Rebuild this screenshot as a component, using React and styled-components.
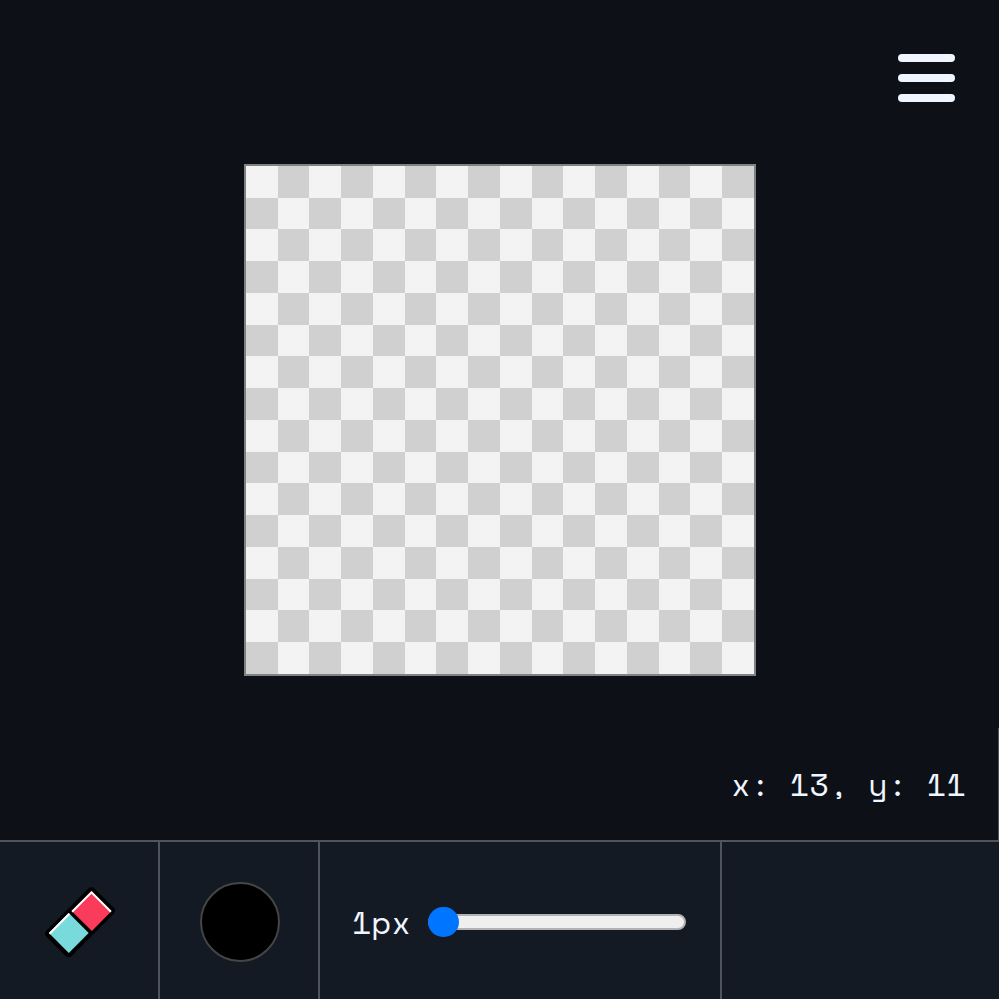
import React, { useEffect, useRef } from 'react';
import styled, { createGlobalStyle } from 'styled-components';

const GlobalStyle = createGlobalStyle`
  * { box-sizing: border-box; }
  body {
    margin: 0;
    overflow: hidden;
    background: #0d1017;
    color: #f0f6ff;
    font-family: "Space Mono", "DejaVu Sans Mono", monospace;
  }
`;

const Editor = styled.div`
  display: grid;
  grid-template-rows: 164px 564px 112px 159px;
  width: 100%;
  height: 999px;
`;

const Header = styled.header`
  display: flex;
  justify-content: flex-end;
  align-items: flex-start;
  padding: 54px 44px 0 0;
`;

const MenuButton = styled.button`
  display: flex;
  flex-direction: column;
  gap: 12px;
  width: 57px;
  padding: 0;
  border: 0;
  background: none;
`;

const MenuBar = styled.span`
  height: 8px;
  border-radius: 4px;
  background: #f0f6ff;
`;

const Stage = styled.main`
  display: flex;
  align-items: flex-start;
  padding-left: 244px;
`;

const Board = styled.canvas`
  width: 512px;
  height: 512px;
  border: 2px solid #808183;
  image-rendering: pixelated;
`;

const Status = styled.div`
  display: flex;
  justify-content: flex-end;
  align-items: center;
  padding-right: 32px;
  border-right: 1px solid #505459;
`;

const Label = styled.span`
  font-size: 32px;
  line-height: 48px;
  white-space: pre;
`;

const Toolbar = styled.footer`
  display: grid;
  grid-template-columns: 160px 160px 402px 1fr;
  border-top: 2px solid #50545b;
  background: #131a23;
`;

const Tool = styled.div`
  display: flex;
  align-items: center;
  justify-content: center;
  height: 160px;
  padding-left: ${({ $edge }) => ($edge ? '2px' : '0')};
  border-right: 2px solid #50545b;
`;

const SizeTool = styled(Tool)`
  justify-content: flex-start;
  gap: 17.25px;
  padding-left: 32px;
`;

const Swatch = styled.button`
  width: 80px;
  height: 80px;
  margin-left: 2px;
  padding: 0;
  border: 2px solid #454545;
  border-radius: 50%;
  background: #000;
`;

const SizeSlider = styled.input`
  appearance: none;
  width: 258px;
  height: 16px;
  margin: 0;
  border: 2px solid #b2b2b5;
  border-radius: 8px;
  background: #efefef;

  &::-webkit-slider-thumb {
    appearance: none;
    width: 30.5px;
    height: 30.5px;
    margin-left: -2px;
    border-radius: 50%;
    background: #0075ff;
  }
`;

const EraserIcon = () => (
  <svg width="80" height="80" viewBox="0 0 80 80">
    <path d="M51.4 9.4 70.8 28.8 28.6 71 9.2 51.6Z" stroke="#000" strokeWidth="8.4" strokeLinejoin="round" />
    <path d="M51.5 8.9 71.6 29 51.9 48.9 31.6 29Z" fill="#fa3b5b" />
    <path d="M28.7 31 48.7 51 28.8 70.9 8.9 51Z" fill="#79dadb" />
    <path d="M31.4 29 51.5 8.9 71.6 29 70.2 30.4 51.5 11.7 32.8 30.4Z" fill="#fff" />
    <path d="M8.8 51 28.6 31 30.2 32.6 10.2 52.4Z" fill="#fff" />
  </svg>
);

const CELLS = 16;
const BOARD_SIZE = 508;

// Whole-pixel position of a cell edge; halves go to the lower pixel.
const edge = (i) => Math.ceil((i * BOARD_SIZE) / CELLS - 0.5);

function PixelBoard() {
  const ref = useRef(null);
  useEffect(() => {
    const ctx = ref.current.getContext('2d');
    for (let y = 0; y < CELLS; y += 1) {
      for (let x = 0; x < CELLS; x += 1) {
        ctx.fillStyle = (x + y) % 2 ? '#d0d0d0' : '#f3f3f3';
        ctx.fillRect(edge(x), edge(y), edge(x + 1) - edge(x), edge(y + 1) - edge(y));
      }
    }
  }, []);
  return <Board ref={ref} width={BOARD_SIZE} height={BOARD_SIZE} />;
}

export default function App() {
  return (
    <>
      <GlobalStyle />
      <Editor>
        <Header>
          <MenuButton aria-label="Menu">
            <MenuBar />
            <MenuBar />
            <MenuBar />
          </MenuButton>
        </Header>
        <Stage>
          <PixelBoard />
        </Stage>
        <Status>
          <Label>x: 13, y: 11</Label>
        </Status>
        <Toolbar>
          <Tool $edge>
            <EraserIcon />
          </Tool>
          <Tool>
            <Swatch aria-label="Color" />
          </Tool>
          <SizeTool>
            <Label>1px</Label>
            <SizeSlider type="range" min="1" max="16" defaultValue="1" aria-label="Brush size" />
          </SizeTool>
        </Toolbar>
      </Editor>
    </>
  );
}
